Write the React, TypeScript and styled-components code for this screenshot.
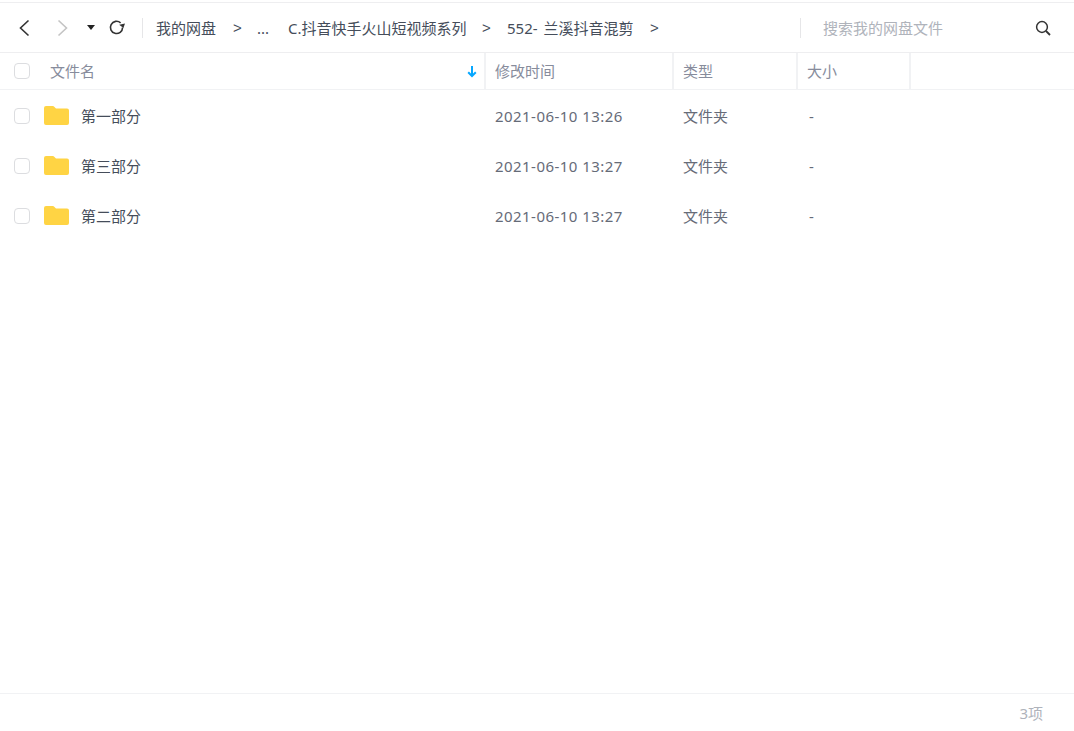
import styled, { createGlobalStyle } from 'styled-components'

const rows = [
  { name: '第一部分', time: '2021-06-10 13:26' },
  { name: '第三部分', time: '2021-06-10 13:27' },
  { name: '第二部分', time: '2021-06-10 13:27' },
]

const crumbs = [
  { label: '我的网盘', width: 77 },
  { label: '>', width: 24, sep: true },
  { label: '...', width: 31 },
  { label: 'C.抖音快手火山短视频系列', width: 194 },
  { label: '>', width: 25, sep: true },
  { label: '552- 兰溪抖音混剪', width: 143 },
  { label: '>', width: 20, sep: true },
]

const App = () => {
  return (
    <Page>
      <GlobalStyle />
      <Toolbar>
        <NavButton $gap={27}>
          <svg width="12" height="18" viewBox="0 0 12 18" fill="none" stroke="#333" strokeWidth="1.6">
            <path d="M10.5 1.5 2.5 9l8 7.5" />
          </svg>
        </NavButton>
        <NavButton $gap={18}>
          <svg width="12" height="18" viewBox="0 0 12 18" fill="none" stroke="#c4c4c4" strokeWidth="1.6">
            <path d="M1.5 1.5 9.5 9l-8 7.5" />
          </svg>
        </NavButton>
        <Caret />
        <RefreshButton>
          <svg width="17" height="17" viewBox="0 0 17 17" fill="none">
            <path d="M14.6 8.5a6.1 6.1 0 1 1-2-4.6" stroke="#333" strokeWidth="1.6" />
            <path d="M17 4.5 15.4 9 11.2 5.8z" fill="#333" />
          </svg>
        </RefreshButton>
        <Divider />
        <Crumbs>
          {crumbs.map((c, i) => (
            <Crumb key={i} $width={c.width} $sep={c.sep}>
              {c.label}
            </Crumb>
          ))}
        </Crumbs>
        <SearchDivider />
        <SearchText>搜索我的网盘文件</SearchText>
        <SearchIcon>
          <svg width="16" height="16" viewBox="0 0 16 16" fill="none" stroke="#333" strokeWidth="1.5">
            <circle cx="7" cy="7" r="5.4" />
            <path d="m11 11 4 4" strokeWidth="1.8" />
          </svg>
        </SearchIcon>
      </Toolbar>
      <TableHead>
        <NameHead>
          <Check />
          <HeadLabel>文件名</HeadLabel>
          <SortArrow>
            <svg width="10" height="12" viewBox="0 0 10 12" fill="none" stroke="#06a7ff" strokeWidth="2">
              <path d="M5 0v10M1.2 6.2 5 10l3.8-3.8" />
            </svg>
          </SortArrow>
        </NameHead>
        <HeadCell $width={188}>修改时间</HeadCell>
        <HeadCell $width={124}>类型</HeadCell>
        <HeadCell $width={113}>大小</HeadCell>
      </TableHead>
      <Body>
        {rows.map((r) => (
          <Row key={r.name}>
            <NameCell>
              <Check />
              <Folder>
                <svg width="25" height="19" viewBox="0 0 25 19">
                  <path
                    d="M0 2a2 2 0 0 1 2-2h6.6c.8 0 1.4.3 1.9.9L12 2.6h11a2 2 0 0 1 2 2V17a2 2 0 0 1-2 2H2a2 2 0 0 1-2-2z"
                    fill="#ffd444"
                  />
                </svg>
              </Folder>
              <FileName>{r.name}</FileName>
            </NameCell>
            <TimeCell>{r.time}</TimeCell>
            <TypeCell>文件夹</TypeCell>
            <SizeCell>-</SizeCell>
          </Row>
        ))}
      </Body>
      <Footer>3项</Footer>
    </Page>
  )
}

export default App

const GlobalStyle = createGlobalStyle`
  html, body {
    margin: 0;
    padding: 0;
    background: #fff;
  }
  body {
    font-family: "Noto Sans", "Noto Sans CJK SC", sans-serif;
  }
`
const Page = styled.div`
  width: 1074px;
  height: 731px;
  display: flex;
  flex-direction: column;
  overflow: hidden;
  background: #fff;
  padding-top: 2px;
  box-sizing: border-box;
`
const Toolbar = styled.div`
  height: 51px;
  flex: none;
  box-sizing: border-box;
  display: flex;
  align-items: center;
  padding-left: 18px;
  border-top: 1px solid #eeeef0;
  border-bottom: 1px solid #eeeef0;
`
const NavButton = styled.div<{ $gap: number }>`
  width: 12px;
  height: 18px;
  margin-right: ${(p) => p.$gap}px;
  display: flex;
`
const Caret = styled.div`
  width: 0;
  height: 0;
  margin-right: 13px;
  border-left: 4px solid transparent;
  border-right: 4px solid transparent;
  border-top: 5px solid #222;
`
const RefreshButton = styled.div`
  width: 17px;
  height: 17px;
  display: flex;
`
const Divider = styled.div`
  width: 1px;
  height: 20px;
  margin: 0 13px 0 17px;
  background: #e6e6e8;
`
const Crumbs = styled.div`
  display: flex;
  align-items: center;
  width: 644px;
`
const Crumb = styled.span<{ $width: number; $sep?: boolean }>`
  flex: none;
  width: ${(p) => p.$width}px;
  font-size: 15px;
  line-height: 20px;
  word-spacing: 2px;
  color: #454d5a;
  white-space: nowrap;
  ${(p) => p.$sep && 'font-family: "Liberation Sans", sans-serif;'}
`
const SearchDivider = styled.div`
  width: 1px;
  height: 20px;
  margin-right: 22px;
  background: #e6e6e8;
`
const SearchText = styled.span`
  width: 212px;
  flex: none;
  font-size: 15px;
  line-height: 20px;
  color: #afb3bb;
  white-space: nowrap;
`
const SearchIcon = styled.div`
  width: 16px;
  height: 16px;
  display: flex;
`
const TableHead = styled.div`
  height: 37px;
  flex: none;
  box-sizing: border-box;
  display: flex;
  border-bottom: 1px solid #f1f2f4;
`
const NameHead = styled.div`
  width: 486px;
  flex: none;
  box-sizing: border-box;
  display: flex;
  align-items: center;
  padding: 0 7px 0 14px;
  border-right: 2px solid #f1f2f4;
`
const HeadLabel = styled.span`
  margin-left: 20px;
  font-size: 15px;
  line-height: 20px;
  color: #878c9c;
  flex: 1;
`
const SortArrow = styled.div`
  width: 10px;
  height: 12px;
  margin-top: 2px;
  display: flex;
`
const HeadCell = styled.div<{ $width: number }>`
  width: ${(p) => p.$width}px;
  flex: none;
  box-sizing: border-box;
  padding-left: 9px;
  display: flex;
  align-items: center;
  font-size: 15px;
  line-height: 20px;
  color: #878c9c;
  border-right: 2px solid #f1f2f4;
`
const Body = styled.div`
  flex: 1;
  padding-top: 1px;
`
const Row = styled.div`
  height: 50px;
  display: flex;
  align-items: center;
  font-size: 15px;
  line-height: 20px;
  color: #454d5a;
`
const NameCell = styled.div`
  width: 495px;
  flex: none;
  box-sizing: border-box;
  display: flex;
  align-items: center;
  padding-left: 14px;
`
const Check = styled.div`
  width: 16px;
  height: 16px;
  flex: none;
  box-sizing: border-box;
  background: #fff;
  border: 1.5px solid #dcdde0;
  border-radius: 4px;
`
const Folder = styled.div`
  width: 25px;
  height: 19px;
  margin-left: 14px;
  margin-top: -2px;
  display: flex;
`
const FileName = styled.span`
  margin-left: 12px;
  color: #454d5a;
`
const TimeCell = styled.div`
  width: 188px;
  flex: none;
  letter-spacing: 0.45px;
  color: #666b78;
`
const TypeCell = styled.div`
  width: 126px;
  flex: none;
  color: #666b78;
`
const SizeCell = styled.div`
  color: #666b78;
`
const Footer = styled.div`
  height: 38px;
  flex: none;
  box-sizing: border-box;
  padding: 0 31px 0 0;
  display: flex;
  align-items: center;
  justify-content: flex-end;
  border-top: 1px solid #f1f2f4;
  font-size: 15px;
  line-height: 20px;
  color: #afb3bb;
`
